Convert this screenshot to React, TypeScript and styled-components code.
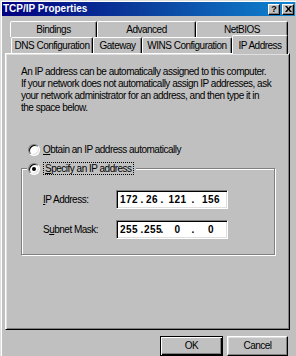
import React from "react";
import styled, { createGlobalStyle } from "styled-components";

const Global = createGlobalStyle`
  html, body { margin: 0; padding: 0; background: #c0c0c0; }
  body {
    font-family: "Liberation Sans", Arial, sans-serif;
    font-size: 10px;
    letter-spacing: -0.5px;
    color: #000;
  }
  * { box-sizing: border-box; }
`;

const Window = styled.div`
  width: 296px;
  height: 356px;
  overflow: hidden;
  background: #c0c0c0;
  border-left: 1px solid #dfdfdf;
  border-top: 1px solid #dfdfdf;
  box-shadow: inset 1px 1px 0 #fff;
  padding: 1px 0 0 1px;
  display: flex;
  flex-direction: column;
`;

const TitleBar = styled.div`
  height: 14px;
  margin-right: 1px;
  background: linear-gradient(to right, #000080 0%, #0a3a9a 45%, #1084d0 100%);
  display: flex;
  align-items: center;
  justify-content: space-between;
  padding: 0 1px 0 1px;
`;

const Title = styled.span`
  color: #fff;
  font-weight: bold;
  font-size: 10px;
  letter-spacing: 0;
  line-height: 14px;
`;

const TitleButtons = styled.div`
  display: flex;
  gap: 2px;
`;

const TitleButton = styled.div`
  width: 12px;
  height: 11px;
  background: #c0c0c0;
  border: 1px solid;
  border-color: #fff #000 #000 #fff;
  box-shadow: inset -1px -1px 0 #808080;
  display: flex;
  align-items: center;
  justify-content: center;
  font-weight: bold;
  font-size: 9px;
  line-height: 9px;
  letter-spacing: 0;
`;

const Tabs = styled.div`
  margin-top: 5px;
  display: flex;
  flex-direction: column;
`;

const TabRow = styled.div<{ $indent: number }>`
  display: flex;
  height: 16px;
  margin-left: ${(p) => p.$indent}px;
`;

const Tab = styled.div<{ $w: number; $selected?: boolean }>`
  width: ${(p) => p.$w}px;
  height: ${(p) => (p.$selected ? 19 : 16)}px;
  margin-top: ${(p) => (p.$selected ? -2 : 0)}px;
  position: relative;
  z-index: ${(p) => (p.$selected ? 2 : 1)};
  background: #c0c0c0;
  border: 1px solid;
  border-bottom: none;
  border-color: #fff #000 transparent #fff;
  border-radius: 2px 2px 0 0;
  box-shadow: inset -1px 0 0 #808080;
  display: flex;
  justify-content: center;
  padding-top: ${(p) => (p.$selected ? 4 : 2)}px;
  line-height: 12px;
  white-space: nowrap;
`;

const Panel = styled.div`
  margin-left: 3px;
  width: 285px;
  height: 279px;
  border: 1px solid;
  border-color: #fff #000 #000 #fff;
  box-shadow: inset 1px 1px 0 #dfdfdf, inset -1px -1px 0 #808080;
  padding: 12px 15px 0 15px;
  display: flex;
  flex-direction: column;
`;

const Para = styled.p`
  margin: 0;
  line-height: 12px;
  white-space: nowrap;
`;

const RadioRow = styled.label`
  display: flex;
  align-items: center;
  gap: 3px;
  height: 13px;
  line-height: 13px;
  white-space: nowrap;
`;

const RadioDot = styled.span<{ $checked?: boolean }>`
  width: 12px;
  height: 12px;
  flex: none;
  border-radius: 50%;
  background: #fff;
  border: 1px solid;
  border-color: #808080 #fff #fff #808080;
  box-shadow: inset 1px 1px 0 #000, inset -1px -1px 0 #dfdfdf;
  display: flex;
  align-items: center;
  justify-content: center;
  &::after {
    content: "";
    display: ${(p) => (p.$checked ? "block" : "none")};
    width: 4px;
    height: 4px;
    border-radius: 50%;
    background: #000;
  }
`;

const FirstRadio = styled.div`
  margin-top: 29px;
  padding-left: 7px;
`;

const Group = styled.fieldset`
  margin: 6px 0 0 0;
  width: 254px;
  height: 93px;
  padding: 0;
  border: 1px solid #808080;
  box-shadow: inset 1px 1px 0 #fff, 1px 1px 0 #fff;
`;

const Legend = styled.legend`
  margin-left: 5px;
  padding: 0 2px 0 1px;
  background: #c0c0c0;
`;

const Focus = styled.span`
  border: 1px dotted #000;
  padding: 0 1px;
  line-height: 11px;
`;

const Fields = styled.div`
  display: grid;
  grid-template-columns: 73px 112px;
  row-gap: 11px;
  align-items: center;
  margin: 15px 0 0 21px;
`;

const Label = styled.span`
  white-space: nowrap;
`;

const IpBox = styled.div`
  height: 19px;
  background: #fff;
  border: 1px solid;
  border-color: #808080 #fff #fff #808080;
  box-shadow: inset 1px 1px 0 #000, inset -1px -1px 0 #dfdfdf;
  display: flex;
  align-items: center;
  padding-left: 1px;
  font-weight: bold;
  font-size: 10px;
  letter-spacing: 0.4px;
`;

const Octet = styled.span<{ $w: number }>`
  width: ${(p) => p.$w}px;
  text-align: center;
`;

const Dot = styled.span`
  width: 4px;
  text-align: center;
`;

const Footer = styled.div`
  display: flex;
  justify-content: flex-end;
  gap: 4px;
  margin-top: 6px;
  padding-right: 8px;
`;

const Button = styled.div<{ $w: number; $default?: boolean }>`
  width: ${(p) => p.$w}px;
  height: 20px;
  background: #c0c0c0;
  border: 1px solid;
  border-color: ${(p) => (p.$default ? "#000" : "#fff #000 #000 #fff")};
  box-shadow: ${(p) =>
    p.$default
      ? "inset 1px 1px 0 #fff, inset -1px -1px 0 #000, inset -2px -2px 0 #808080"
      : "inset -1px -1px 0 #808080, inset 1px 1px 0 #dfdfdf"};
  display: flex;
  justify-content: center;
  padding-top: 3px;
  line-height: 12px;
`;

const widths = [22, 16, 27, 32];

function IpField({ value }: { value: string[] }) {
  return (
    <IpBox>
      {value.map((v, i) => (
        <React.Fragment key={i}>
          {i > 0 && <Dot>.</Dot>}
          <Octet $w={widths[i]}>{v}</Octet>
        </React.Fragment>
      ))}
    </IpBox>
  );
}

export default function App() {
  return (
    <>
      <Global />
      <Window>
        <TitleBar>
          <Title>TCP/IP Properties</Title>
          <TitleButtons>
            <TitleButton>?</TitleButton>
            <TitleButton>
              <svg width="7" height="6" viewBox="0 0 7 6">
                <path d="M0 0h2l1.5 2L5 0h2L4.5 3 7 6H5L3.5 4 2 6H0l2.5-3z" fill="#000" />
              </svg>
            </TitleButton>
          </TitleButtons>
        </TitleBar>
        <Tabs>
          <TabRow $indent={8}>
            <Tab $w={87}>Bindings</Tab>
            <Tab $w={99}>Advanced</Tab>
            <Tab $w={92}>NetBIOS</Tab>
          </TabRow>
          <TabRow $indent={9}>
            <Tab $w={82}>DNS Configuration</Tab>
            <Tab $w={49}>Gateway</Tab>
            <Tab $w={90}>WINS Configuration</Tab>
            <Tab $w={56} $selected>IP Address</Tab>
          </TabRow>
        </Tabs>
        <Panel>
          <Para>
            An IP address can be automatically assigned to this computer.
            <br />
            If your network does not automatically assign IP addresses, ask
            <br />
            your network administrator for an address, and then type it in
            <br />
            the space below.
          </Para>
          <FirstRadio>
            <RadioRow>
              <RadioDot />
              <span>
                <u>O</u>btain an IP address automatically
              </span>
            </RadioRow>
          </FirstRadio>
          <Group>
            <Legend>
              <RadioRow>
                <RadioDot $checked />
                <Focus>
                  <u>S</u>pecify an IP address
                </Focus>
              </RadioRow>
            </Legend>
            <Fields>
              <Label>
                <u>I</u>P Address:
              </Label>
              <IpField value={["172", "26", "121", "156"]} />
              <Label>
                S<u>u</u>bnet Mask:
              </Label>
              <IpField value={["255", "255", "0", "0"]} />
            </Fields>
          </Group>
        </Panel>
        <Footer>
          <Button $w={63} $default>
            OK
          </Button>
          <Button $w={61}>Cancel</Button>
        </Footer>
      </Window>
    </>
  );
}
